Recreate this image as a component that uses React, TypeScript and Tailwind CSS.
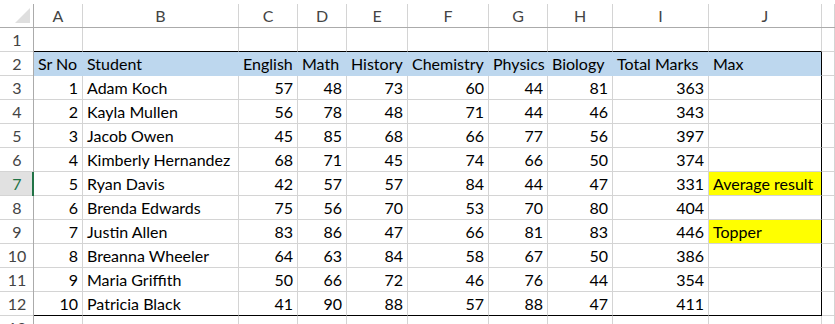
import React from "react";

const cols = ["A", "B", "C", "D", "E", "F", "G", "H", "I", "J", ""];
const headers = ["Sr No", "Student", "English", "Math", "History", "Chemistry", "Physics", "Biology", "Total Marks", "Max"];
const data: [number, string, number, number, number, number, number, number, number, string][] = [
  [1, "Adam Koch", 57, 48, 73, 60, 44, 81, 363, ""],
  [2, "Kayla Mullen", 56, 78, 48, 71, 44, 46, 343, ""],
  [3, "Jacob Owen", 45, 85, 68, 66, 77, 56, 397, ""],
  [4, "Kimberly Hernandez", 68, 71, 45, 74, 66, 50, 374, ""],
  [5, "Ryan Davis", 42, 57, 57, 84, 44, 47, 331, "Average result"],
  [6, "Brenda Edwards", 75, 56, 70, 53, 70, 80, 404, ""],
  [7, "Justin Allen", 83, 86, 47, 66, 81, 83, 446, "Topper"],
  [8, "Breanna Wheeler", 64, 63, 84, 58, 67, 50, 386, ""],
  [9, "Maria Griffith", 50, 66, 72, 46, 76, 44, 354, ""],
  [10, "Patricia Black", 41, 90, 88, 57, 88, 47, 411, ""],
];

const gridCols = "grid grid-cols-[34px_49px_156px_59px_49px_61px_81px_59px_65px_96px_113px_1fr]";

function RowHeader({ n, selected }: { n: number | string; selected?: boolean }) {
  return (
    <div
      className={
        "h-[24px] flex items-center justify-center border-b border-[#d4d4d4] relative " +
        (selected ? "bg-[#e1e1e1] text-[#217346]" : "bg-white text-[#444444]")
      }
    >
      <span className="text-[16px]">{n}</span>
      <div className={"absolute right-0 top-0 bottom-[-1px] " + (selected ? "w-[2px] bg-[#217346]" : "w-[1px] bg-[#ababab]")} />
    </div>
  );
}

export default function App() {
  return (
    <div className="w-[835px] h-[324px] overflow-hidden bg-white pt-[4px]" style={{ fontFamily: "Lato, 'Liberation Sans', sans-serif" }}>
      {/* column header row */}
      <div className={gridCols + " h-[24px] border-b border-[#ababab]"}>
        <div className="h-[23px] border-r border-[#ababab] relative">
          <svg width="34" height="23" className="absolute left-0 top-0">
            <polygon points="30,4 30,19 15,19" fill="#dfdfdf" />
          </svg>
        </div>
        {cols.map((c, i) => (
          <div key={i} className="h-[23px] flex items-center justify-center border-r border-[#d4d4d4] text-[#444444] text-[16px]">
            {c}
          </div>
        ))}
      </div>

      {/* row 1 */}
      <div className={gridCols}>
        <RowHeader n={1} />
        {cols.map((_, i) => (
          <div
            key={i}
            className={
              "h-[24px] border-r border-b " +
              (i < 10 ? "border-b-black border-r-[#d4d4d4]" : "border-[#d4d4d4]")
            }
          />
        ))}
      </div>

      {/* row 2 header */}
      <div className={gridCols}>
        <RowHeader n={2} />
        {headers.map((h, i) => (
          <div
            key={i}
            className={
              "h-[24px] bg-[#bdd7ee] flex items-center pl-[4px] text-[16px] text-black whitespace-nowrap border-b border-[#bdd7ee] " +
              (i === 9 ? "border-r border-r-black" : "")
            }
          >
            {h}
          </div>
        ))}
        <div className="h-[24px] border-r border-b border-[#d4d4d4]" />
      </div>

      {data.map((r, ri) => {
        const last = ri === data.length - 1;
        return (
          <div key={ri} className={gridCols}>
            <RowHeader n={ri + 3} selected={ri === 4} />
            {r.map((v, ci) => {
              const isNum = typeof v === "number";
              const isJ = ci === 9;
              const yellow = isJ && v !== "";
              return (
                <div
                  key={ci}
                  className={
                    "h-[24px] flex items-center text-[16px] text-black whitespace-nowrap border-b " +
                    (isNum ? "justify-end pr-[4px] " : "pl-[4px] ") +
                    (last ? "border-b-black " : "border-b-[#d4d4d4] ") +
                    (isJ ? "border-r border-r-black " : "border-r border-r-[#d4d4d4] ") +
                    (yellow ? "bg-[#ffff00]" : "bg-white")
                  }
                >
                  {v}
                </div>
              );
            })}
            <div className="h-[24px] border-r border-b border-[#d4d4d4]" />
          </div>
        );
      })}

      {/* row 13 partial */}
      <div className={gridCols}>
        <RowHeader n={13} />
        {cols.map((_, i) => (
          <div key={i} className="h-[24px] border-r border-b border-[#d4d4d4]" />
        ))}
      </div>
    </div>
  );
}
